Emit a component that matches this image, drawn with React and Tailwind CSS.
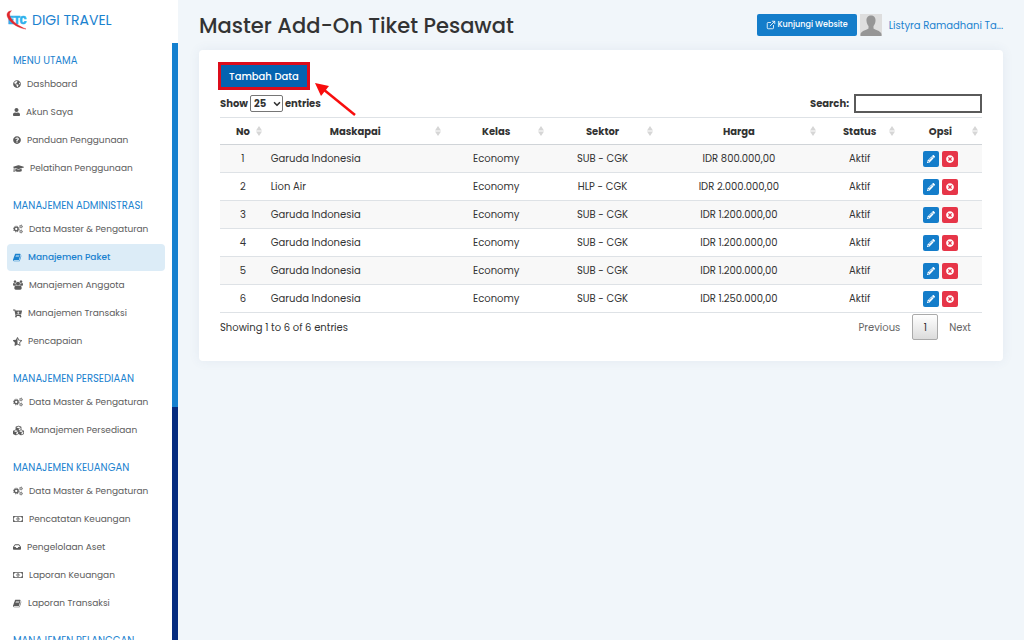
import { useState } from "react";
import {
  FaCartArrowDown,
  FaCubes,
  FaGlobeAmericas,
  FaGraduationCap,
  FaInbox,
  FaPencilAlt,
  FaQuestionCircle,
  FaRegMoneyBillAlt,
  FaStarHalfAlt,
  FaTimesCircle,
  FaUser,
} from "react-icons/fa";
import { ChevronDown, ExternalLink } from "lucide-react";

function BookIcon({ className }) {
  return (
    <svg viewBox="0 0 1792 1792" fill="currentColor" className={className} aria-hidden="true">
      <path d="M1639 478q40 57 18 129l-275 906q-19 64-76.5 107.5t-122.5 43.5h-923q-77 0-148.5-53.5t-99.5-131.5q-24-67-2-127 0-4 3-27t4-37q1-8-3-21.5t-3-19.5q2-11 8-21t16.5-23.5 16.5-23.5q23-38 45-91.5t30-91.5q3-10 .5-30t-.5-28q3-11 17-28t17-23q21-36 42-92t25-90q1-9-2.5-32t.5-28q4-13 22-30.5t22-22.5q19-26 42.5-84.5t27.5-96.5q1-8-3-25.5t-2-26.5q2-8 9-18t18-23 17-21q8-12 16.5-30.5t15-35 16-36 19.5-32 26.5-23.5 36-11.5 47.5 5.5l-1 3q38-9 51-9h761q74 0 114 56t18 130l-274 906q-36 119-71.5 153.5t-128.5 34.5h-869q-27 0-38 15-11 16-1 43 24 70 144 70h923q29 0 56-15.5t35-41.5l300-987q7-22 5-57 38 15 59 43zm-1064 2q-4 13 2 22.5t20 9.5h608q13 0 25.5-9.5t16.5-22.5l21-64q4-13-2-22.5t-20-9.5h-608q-13 0-25.5 9.5t-16.5 22.5zm-83 256q-4 13 2 22.5t20 9.5h608q13 0 25.5-9.5t16.5-22.5l21-64q4-13-2-22.5t-20-9.5h-608q-13 0-25.5 9.5t-16.5 22.5z" />
    </svg>
  );
}

function UsersIcon({ className }) {
  return (
    <svg viewBox="0 0 1920 1792" fill="currentColor" className={className} aria-hidden="true">
      <path d="M593 896q-162 5-265 128h-134q-82 0-138-40.5t-56-118.5q0-353 124-353 6 0 43.5 21t97.5 42.5 119 21.5q67 0 133-23-5 37-5 66 0 139 81 256zm1071 637q0 120-73 189.5t-194 69.5h-874q-121 0-194-69.5t-73-189.5q0-53 3.5-103.5t14-109 26.5-108.5 43-97.5 62-81 85.5-53.5 111.5-20q10 0 43 21.5t73 48 107 48 135 21.5 135-21.5 107-48 73-48 43-21.5q61 0 111.5 20t85.5 53.5 62 81 43 97.5 26.5 108.5 14 109 3.5 103.5zm-1024-1277q0 106-75 181t-181 75-181-75-75-181 75-181 181-75 181 75 75 181zm704 384q0 159-112.5 271.5t-271.5 112.5-271.5-112.5-112.5-271.5 112.5-271.5 271.5-112.5 271.5 112.5 112.5 271.5zm576 225q0 78-56 118.5t-138 40.5h-134q-103-123-265-128 81-117 81-256 0-29-5-66 66 23 133 23 59 0 119-21.5t97.5-42.5 43.5-21q124 0 124 353zm-128-609q0 106-75 181t-181 75-181-75-75-181 75-181 181-75 181 75 75 181z" />
    </svg>
  );
}

function CogsIcon({ className }) {
  return (
    <svg viewBox="0 0 20 18" fill="none" stroke="currentColor" className={className} aria-hidden="true">
      <circle cx="6.500" cy="9" r="3.700" strokeWidth="2.800" />
      <circle cx="6.500" cy="9" r="5.700" strokeWidth="1.800" strokeDasharray="2.240 2.240" />
      <circle cx="16" cy="4" r="2" strokeWidth="1.600" />
      <circle cx="16" cy="4" r="3.200" strokeWidth="1.200" strokeDasharray="1.680 1.680" />
      <circle cx="16" cy="14" r="2" strokeWidth="1.600" />
      <circle cx="16" cy="14" r="3.200" strokeWidth="1.200" strokeDasharray="1.680 1.680" />
    </svg>
  );
}

const MENU = [
  {
    title: "MENU UTAMA",
    items: [
      { label: "Dashboard", icon: FaGlobeAmericas, size: "size-2" },
      { label: "Akun Saya", icon: FaUser, size: "h-2 w-[7px]" },
      { label: "Panduan Penggunaan", icon: FaQuestionCircle, size: "size-2" },
      { label: "Pelatihan Penggunaan", icon: FaGraduationCap, size: "size-[11px]" },
    ],
  },
  {
    title: "MANAJEMEN ADMINISTRASI",
    items: [
      { label: "Data Master & Pengaturan", icon: CogsIcon, size: "size-[10px]" },
      { label: "Manajemen Paket", icon: BookIcon, size: "size-[9px]", active: true },
      { label: "Manajemen Anggota", icon: UsersIcon, size: "size-[10px]" },
      { label: "Manajemen Transaksi", icon: FaCartArrowDown, size: "size-[9px]" },
      { label: "Pencapaian", icon: FaStarHalfAlt, size: "size-[9px]" },
    ],
  },
  {
    title: "MANAJEMEN PERSEDIAAN",
    items: [
      { label: "Data Master & Pengaturan", icon: CogsIcon, size: "size-[10px]" },
      { label: "Manajemen Persediaan", icon: FaCubes, size: "size-[11px]" },
    ],
  },
  {
    title: "MANAJEMEN KEUANGAN",
    items: [
      { label: "Data Master & Pengaturan", icon: CogsIcon, size: "size-[10px]" },
      { label: "Pencatatan Keuangan", icon: FaRegMoneyBillAlt, size: "size-[10px]" },
      { label: "Pengelolaan Aset", icon: FaInbox, size: "size-2" },
      { label: "Laporan Keuangan", icon: FaRegMoneyBillAlt, size: "size-[10px]" },
      { label: "Laporan Transaksi", icon: BookIcon, size: "size-[9px]" },
    ],
  },
  { title: "MANAJEMEN PELANGGAN", items: [] },
];

const COLUMNS = [
  { label: "No", width: "w-[6%]" },
  { label: "Maskapai", width: "w-[23.5%]" },
  { label: "Kelas", width: "w-[13.5%]" },
  { label: "Sektor", width: "w-[14.4%]" },
  { label: "Harga", width: "w-[21.4%]" },
  { label: "Status", width: "w-[10.3%]" },
  { label: "Opsi", width: "w-[10.9%]" },
];

const ROWS = [
  { maskapai: "Garuda Indonesia", sektor: "SUB - CGK", harga: "IDR 800.000,00" },
  { maskapai: "Lion Air", sektor: "HLP - CGK", harga: "IDR 2.000.000,00" },
  { maskapai: "Garuda Indonesia", sektor: "SUB - CGK", harga: "IDR 1.200.000,00" },
  { maskapai: "Garuda Indonesia", sektor: "SUB - CGK", harga: "IDR 1.200.000,00" },
  { maskapai: "Garuda Indonesia", sektor: "SUB - CGK", harga: "IDR 1.200.000,00" },
  { maskapai: "Garuda Indonesia", sektor: "SUB - CGK", harga: "IDR 1.250.000,00" },
];

function Logo() {
  return (
    <svg viewBox="0 0 22 20" className="h-5 w-[22px] shrink-0" aria-hidden="true">
      <text
        x="2"
        y="14"
        fontFamily="Roboto, sans-serif"
        fontWeight="900"
        fontSize="10"
        fill="#2fb0ec"
        stroke="#2fb0ec"
        strokeWidth=".6"
      >
        ETC
      </text>
      <path
        d="M5.500 .800C1 1.300 0 4.500 2 8C5 13.500 13 18.500 20 19C13.500 16.500 7.500 12.500 4.500 7.500C3 4.500 3.500 2 5.500 .800Z"
        fill="#e0282e"
        stroke="#e0282e"
        strokeWidth=".4"
      />
    </svg>
  );
}

function Avatar() {
  return (
    <svg viewBox="0 0 22 22" className="size-[22px] shrink-0" aria-hidden="true">
      <rect width="22" height="22" fill="#dedede" />
      <path
        d="M11 1.500C7.500 1.500 6.200 4 6.500 7C6.700 9.500 7.700 11 8.500 12V14.500C7 16 1.500 16.500 .500 20V22H21.500V20C20.500 16.500 15 16 13.500 14.500V12C14.300 11 15.300 9.500 15.500 7C15.800 4 14.500 1.500 11 1.500Z"
        fill="#969696"
      />
    </svg>
  );
}

function Sidebar() {
  return (
    <aside className="flex h-full w-[178px] shrink-0 flex-col bg-white">
      <a href="#" className="flex h-[43px] shrink-0 items-center gap-1 pb-[3px] pl-[6px] text-sm whitespace-nowrap text-[#1b82cf]">
        <Logo />
        DIGI TRAVEL
      </a>
      <div className="flex min-h-0 flex-1">
        <nav className="min-w-0 flex-1 overflow-hidden px-[7px] pt-2">
          {MENU.map((group) => (
            <section key={group.title} className="mb-[14px]">
              <h2 className="pl-[6px] text-[10px] leading-5 whitespace-nowrap text-[#1b82cf]">{group.title}</h2>
              <ul className="flex flex-col gap-px">
                {group.items.map(({ label, icon: Icon, size, active }) => (
                  <li key={label}>
                    <a
                      href="#"
                      className={`flex h-[27px] items-center gap-[6px] rounded pl-[6px] text-[9px] whitespace-nowrap ${
                        active ? "bg-[#dcecf7] font-medium text-[#1b82cf]" : "text-[#5c5c5c]"
                      }`}
                    >
                      <Icon className={`mb-px shrink-0 ${size}`} />
                      {label}
                    </a>
                  </li>
                ))}
              </ul>
            </section>
          ))}
        </nav>
        {/* scroll track */}
        <div className="w-[6px] bg-[#052c80]">
          <div className="h-[61%] bg-[#1480cf]" />
        </div>
      </div>
    </aside>
  );
}

function SortMark() {
  return (
    <svg viewBox="0 0 6 10" className="absolute right-1 h-[10px] w-[6px]" fill="#d6d6d6" aria-hidden="true">
      <path d="M3 0L6 4.500H0ZM3 10L0 5.500H6Z" />
    </svg>
  );
}

function DataTable() {
  return (
    <table className="w-full table-fixed border-collapse border-b border-[#dee2e6] text-center text-[10px]">
      <thead>
        <tr className="h-[27px] border-t border-b border-t-[#dee2e6] border-b-[#d0d4d8]">
          {COLUMNS.map((col) => (
            <th key={col.label} className={`p-0 ${col.width}`}>
              <button type="button" className="relative flex w-full items-center justify-center font-bold">
                {col.label}
                <SortMark />
              </button>
            </th>
          ))}
        </tr>
      </thead>
      <tbody>
        {ROWS.map((row, i) => (
          <tr key={i} className="h-7 border-t border-[#dee2e6] odd:bg-[#f8f8f8]">
            <td className="p-0">{i + 1}</td>
            <td className="p-0 pl-[5px] text-left">{row.maskapai}</td>
            <td className="p-0">Economy</td>
            <td className="p-0">{row.sektor}</td>
            <td className="p-0">{row.harga}</td>
            <td className="p-0">Aktif</td>
            <td className="p-0">
              <div className="flex justify-center gap-[3px]">
                <button type="button" aria-label="Edit" className="grid size-4 place-items-center rounded-xs bg-[#147dca] text-white">
                  <FaPencilAlt className="size-2" />
                </button>
                <button type="button" aria-label="Hapus" className="grid size-4 place-items-center rounded-xs bg-[#e63548] text-white">
                  <FaTimesCircle className="size-2" />
                </button>
              </div>
            </td>
          </tr>
        ))}
      </tbody>
    </table>
  );
}

export default function App() {
  const [length, setLength] = useState("25");
  const [search, setSearch] = useState("");

  return (
    <div className="flex h-screen overflow-hidden bg-[#f1f6fa] font-['Poppins','Inter',sans-serif] text-[#333]">
      <Sidebar />
      <main className="min-w-0 flex-1 px-[21px]">
        <header className="flex h-[50px] items-center justify-between">
          <h1 className="pt-[2px] text-[21px] font-medium whitespace-nowrap">Master Add-On Tiket Pesawat</h1>
          <div className="flex items-center">
            <a
              href="#"
              className="flex h-[22px] items-center gap-[2px] rounded-xs bg-[#147dca] px-[9px] text-[8px] font-medium whitespace-nowrap text-white"
            >
              <ExternalLink className="size-[10px]" strokeWidth={2} />
              Kunjungi Website
            </a>
            <a href="#" className="ml-[3px] flex items-center gap-[7px] text-[10px] whitespace-nowrap text-[#1b82cf]">
              <Avatar />
              Listyra Ramadhani Ta...
            </a>
          </div>
        </header>

        <section className="rounded-sm bg-white px-[21px] pt-3 pb-[21px] shadow-[0_0_12px_rgba(60,90,140,0.08)]">
          <div className="relative -ml-[2px] w-fit">
            <button
              type="button"
              className="h-7 border-3 border-[#dc0d1b] bg-[#0563b0] px-2 text-[10px] font-medium whitespace-nowrap text-white"
            >
              Tambah Data
            </button>
            <svg viewBox="0 0 42 36" className="absolute top-5 left-full ml-[5px] h-9 w-[42px]" aria-hidden="true">
              <path d="M40 33L8 7" stroke="#f80d0d" strokeWidth="2.500" fill="none" />
              <path d="M0 1L14 4L6 14Z" fill="#f80d0d" />
            </svg>
          </div>

          <div className="flex h-[27px] items-center justify-between text-[10px] font-bold">
            <div className="flex items-center gap-[2px]">
              <label htmlFor="length">Show</label>
              <div className="relative flex items-center">
                <select
                  id="length"
                  value={length}
                  onChange={(e) => setLength(e.target.value)}
                  className="h-[17px] w-[33px] appearance-none rounded-xs border border-[#767676] bg-white pl-[3px]"
                >
                  <option>10</option>
                  <option>25</option>
                  <option>50</option>
                </select>
                <ChevronDown className="pointer-events-none absolute right-px size-[10px]" strokeWidth={4} />
              </div>
              <span>entries</span>
            </div>
            <label className="flex items-center gap-[5px]">
              Search:
              <input
                type="search"
                value={search}
                onChange={(e) => setSearch(e.target.value)}
                className="h-[19px] w-32 border-2 border-[#5a5a5a] bg-white px-1 font-normal"
              />
            </label>
          </div>

          <DataTable />

          <div className="flex items-center justify-between pt-px text-[10px]">
            <p>Showing 1 to 6 of 6 entries</p>
            <div className="flex items-center text-[#666]">
              <button type="button" className="px-3">Previous</button>
              <button
                type="button"
                className="size-[26px] rounded-xs border border-[#aaa] bg-linear-to-b from-white to-[#dcdcdc] text-[#333]"
              >
                1
              </button>
              <button type="button" className="px-[11px]">Next</button>
            </div>
          </div>
        </section>
      </main>
    </div>
  );
}
